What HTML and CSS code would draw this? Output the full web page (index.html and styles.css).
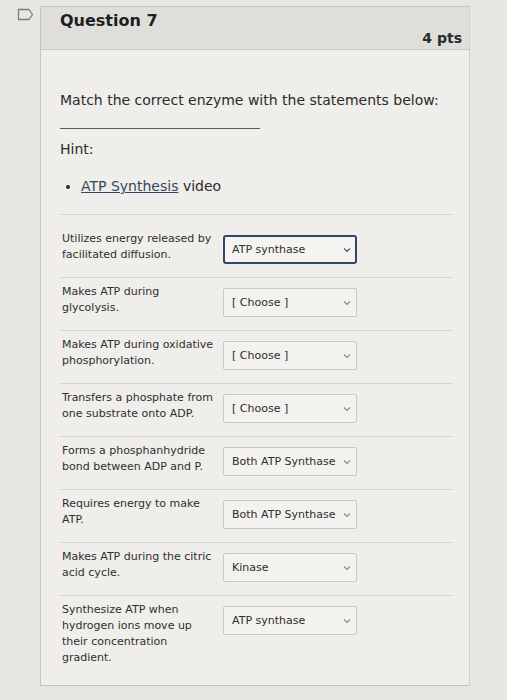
FILE: index.html
```html
<!DOCTYPE html>
<html lang="en">
<head>
    <meta charset="UTF-8">
    <meta name="viewport" content="width=device-width, initial-scale=1.0">
    <title>Question 7</title>
    <link rel="stylesheet" href="styles.css">
</head>
<body>
    <div class="page">
        <div class="gutter">
            <svg class="flag" width="17" height="13" viewBox="0 0 17 13">
                <path d="M1.5 1.5 H12 L15.5 6.5 L12 11.5 H1.5 Z" fill="none" stroke="#7a7a78" stroke-width="1.3" stroke-linejoin="round"/>
            </svg>
        </div>

        <div class="question">
            <div class="q-header">
                <span class="q-name">Question 7</span>
                <span class="q-points">4 pts</span>
            </div>

            <div class="q-body">
                <p class="q-text">Match the correct enzyme with the statements below:</p>
                <hr class="q-rule">
                <p class="hint">Hint:</p>
                <ul class="hint-list">
                    <li><a href="#">ATP Synthesis</a> video</li>
                </ul>

                <div class="answers">
                    <div class="answer-row first">
                        <div class="answer-label">Utilizes energy released by facilitated diffusion.</div>
                        <div class="answer-select focused">
                            <select><option>ATP synthase</option></select>
                            <svg class="caret" width="8" height="6" viewBox="0 0 8 6"><path d="M1 1.5 L4 4.5 L7 1.5" fill="none" stroke="#4a5a78" stroke-width="1.2"/></svg>
                        </div>
                    </div>
                    <div class="answer-row">
                        <div class="answer-label">Makes ATP during glycolysis.</div>
                        <div class="answer-select">
                            <select><option>[ Choose ]</option></select>
                            <svg class="caret" width="8" height="6" viewBox="0 0 8 6"><path d="M1 1.5 L4 4.5 L7 1.5" fill="none" stroke="#8a8a88" stroke-width="1.2"/></svg>
                        </div>
                    </div>
                    <div class="answer-row">
                        <div class="answer-label">Makes ATP during oxidative phosphorylation.</div>
                        <div class="answer-select">
                            <select><option>[ Choose ]</option></select>
                            <svg class="caret" width="8" height="6" viewBox="0 0 8 6"><path d="M1 1.5 L4 4.5 L7 1.5" fill="none" stroke="#8a8a88" stroke-width="1.2"/></svg>
                        </div>
                    </div>
                    <div class="answer-row">
                        <div class="answer-label">Transfers a phosphate from one substrate onto ADP.</div>
                        <div class="answer-select">
                            <select><option>[ Choose ]</option></select>
                            <svg class="caret" width="8" height="6" viewBox="0 0 8 6"><path d="M1 1.5 L4 4.5 L7 1.5" fill="none" stroke="#8a8a88" stroke-width="1.2"/></svg>
                        </div>
                    </div>
                    <div class="answer-row">
                        <div class="answer-label">Forms a phosphanhydride bond between ADP and P.</div>
                        <div class="answer-select">
                            <select><option>Both ATP Synthase</option></select>
                            <svg class="caret" width="8" height="6" viewBox="0 0 8 6"><path d="M1 1.5 L4 4.5 L7 1.5" fill="none" stroke="#8a8a88" stroke-width="1.2"/></svg>
                        </div>
                    </div>
                    <div class="answer-row">
                        <div class="answer-label">Requires energy to make ATP.</div>
                        <div class="answer-select">
                            <select><option>Both ATP Synthase</option></select>
                            <svg class="caret" width="8" height="6" viewBox="0 0 8 6"><path d="M1 1.5 L4 4.5 L7 1.5" fill="none" stroke="#8a8a88" stroke-width="1.2"/></svg>
                        </div>
                    </div>
                    <div class="answer-row">
                        <div class="answer-label">Makes ATP during the citric acid cycle.</div>
                        <div class="answer-select">
                            <select><option>Kinase</option></select>
                            <svg class="caret" width="8" height="6" viewBox="0 0 8 6"><path d="M1 1.5 L4 4.5 L7 1.5" fill="none" stroke="#8a8a88" stroke-width="1.2"/></svg>
                        </div>
                    </div>
                    <div class="answer-row last">
                        <div class="answer-label">Synthesize ATP when hydrogen ions move up their concentration gradient.</div>
                        <div class="answer-select">
                            <select><option>ATP synthase</option></select>
                            <svg class="caret" width="8" height="6" viewBox="0 0 8 6"><path d="M1 1.5 L4 4.5 L7 1.5" fill="none" stroke="#8a8a88" stroke-width="1.2"/></svg>
                        </div>
                    </div>
                </div>
            </div>
        </div>
    </div>
</body>
</html>
```

FILE: styles.css
```css
body {
    margin: 0;
    background-color: #e7e6e2;
    font-family: "DejaVu Sans", Verdana, sans-serif;
    color: #2b2b2b;
}
.page {
    display: flex;
    padding-top: 6px;
}
.gutter {
    width: 40px;
    flex-shrink: 0;
}
.flag {
    display: block;
    margin: 2px 0 0 17px;
}
.question {
    width: 428px;
    background: #efeeea;
    border: 1px solid #c6c5c1;
    border-right-color: #d0cfcb;
}
.q-header {
    display: flex;
    justify-content: space-between;
    background: #dfdeda;
    border-bottom: 1px solid #c9c8c4;
    padding: 3px 7px 2px 19px;
    height: 37px;
}
.q-name {
    font-size: 16px;
    font-weight: bold;
    color: #1e1e1e;
    line-height: 22px;
}
.q-points {
    align-self: flex-end;
    font-size: 14px;
    font-weight: bold;
    color: #2a2a2a;
    line-height: 18px;
}
.q-body {
    padding: 40px 16px 19px 19px;
}
.q-text {
    margin: 0;
    font-size: 14px;
    line-height: 20px;
}
.q-rule {
    width: 200px;
    margin: 18px 0 10px 0;
    border: none;
    border-top: 1px solid #5a5a5a;
}
.hint {
    margin: 0;
    font-size: 14px;
    line-height: 20px;
}
.hint-list {
    margin: 17px 0 0 0;
    padding-left: 21px;
    font-size: 14px;
    line-height: 20px;
}
.hint-list a {
    color: #34495e;
    text-decoration: underline;
}
.answers {
    margin-top: 18px;
}
.answer-row {
    display: flex;
    gap: 7px;
    border-top: 1px solid #d5d4d0;
    padding: 6px 0 13px 2px;
}
.answer-row.first {
    padding-top: 16px;
}
.answer-row.last {
    padding-bottom: 0;
}
.answer-label {
    width: 154px;
    font-size: 11px;
    line-height: 16px;
    color: #2e2e2e;
}
.answer-select {
    display: grid;
    align-items: center;
    width: 134px;
    height: 29px;
    margin-top: 4px;
}
.answer-select select {
    grid-area: 1 / 1;
    appearance: none;
    -webkit-appearance: none;
    height: 29px;
    width: 100%;
    background: #f3f2ef;
    border: 1px solid #c8c9c9;
    border-radius: 2px;
    padding: 0 18px 0 8px;
    font-family: "DejaVu Sans", Verdana, sans-serif;
    font-size: 11px;
    color: #2e2e2e;
}
.answer-select.focused select {
    border: 2px solid #34446a;
    border-radius: 3px;
    padding-left: 7px;
    background: #f5f4f1;
}
.caret {
    grid-area: 1 / 1;
    justify-self: end;
    margin-right: 6px;
}
```
